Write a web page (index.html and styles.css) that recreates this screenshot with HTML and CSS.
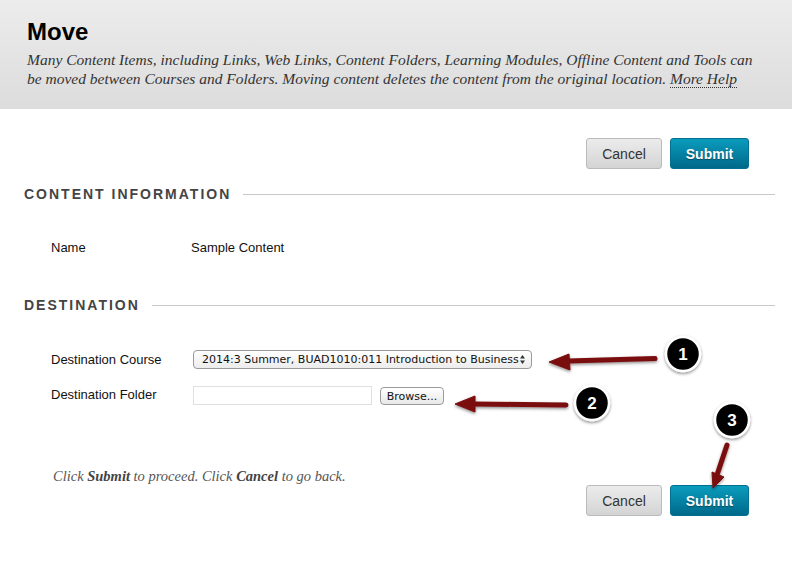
FILE: index.html
```html
<!DOCTYPE html>
<html lang="en">
<head>
<meta charset="utf-8">
<title>Move</title>
<link rel="stylesheet" href="styles.css">
</head>
<body>
<div class="page">
  <header class="page-header">
    <h1 class="title">Move</h1>
    <p class="intro">Many Content Items, including Links, Web Links, Content Folders, Learning Modules, Offline Content and Tools can<br>be moved between Courses and Folders. Moving content deletes the content from the original location. <a class="help">More Help</a></p>
  </header>
  <div class="actions actions-top">
    <button class="btn btn-cancel">Cancel</button>
    <button class="btn btn-submit">Submit</button>
  </div>
  <section class="section section-info">
    <div class="section-head"><h2 class="section-title">CONTENT INFORMATION</h2><span class="rule"></span></div>
    <div class="row row-name"><span class="label">Name</span><span class="value">Sample Content</span></div>
  </section>
  <section class="section section-dest">
    <div class="section-head"><h2 class="section-title">DESTINATION</h2><span class="rule"></span></div>
    <div class="row row-course">
      <span class="label">Destination Course</span>
      <div class="select"><span class="select-text">2014:3 Summer, BUAD1010:011 Introduction to Business</span>
        <svg class="select-caret" width="7" height="11" viewBox="0 0 7 11"><path d="M3.5 1 6 4.4H1zM3.5 10 1 6.6h5z" fill="#333"/></svg>
      </div>
    </div>
    <div class="row row-folder">
      <span class="label">Destination Folder</span>
      <div class="text-input"></div>
      <button class="browse">Browse...</button>
    </div>
  </section>
  <div class="footer-row">
    <p class="hint">Click <b>Submit</b> to proceed. Click <b>Cancel</b> to go back.</p>
    <div class="actions actions-bottom">
      <button class="btn btn-cancel">Cancel</button>
      <button class="btn btn-submit">Submit</button>
    </div>
  </div>
  <svg class="annotations" width="792" height="561" viewBox="0 0 792 561">
    <defs>
      <filter id="sh" x="-30%" y="-30%" width="160%" height="160%"><feDropShadow dx="0" dy="1.5" stdDeviation="1.5" flood-color="#000" flood-opacity=".45"/></filter>
    </defs>
    <g filter="url(#sh)" fill="#7a0c10" stroke="#7a0c10">
      <path d="M568 361 L655 358.5" stroke-width="5" stroke-linecap="round" fill="none"/>
      <path d="M549 362 L569 354 L570 370 Z" stroke-width="1"/>
      <path d="M472 404 L566 405" stroke-width="5" stroke-linecap="round" fill="none"/>
      <path d="M455 404 L475 396 L475 412 Z" stroke-width="1"/>
      <path d="M727 445 L717 475" stroke-width="5" stroke-linecap="round" fill="none"/>
      <path d="M713 488 L712 472 L724 477 Z" stroke-width="1"/>
    </g>
    <g class="badge">
      <circle cx="683" cy="354" r="17" fill="#000" stroke="#fff" stroke-width="2.5" filter="url(#sh)"/>
      <text x="683" y="360" text-anchor="middle">1</text>
      <circle cx="592" cy="403" r="17" fill="#000" stroke="#fff" stroke-width="2.5" filter="url(#sh)"/>
      <text x="592" y="409" text-anchor="middle">2</text>
      <circle cx="732" cy="420" r="17" fill="#000" stroke="#fff" stroke-width="2.5" filter="url(#sh)"/>
      <text x="732" y="426" text-anchor="middle">3</text>
    </g>
  </svg>
</div>
</body>
</html>
```
FILE: styles.css
```css
* { box-sizing: border-box; }
html, body { margin: 0; padding: 0; background: #fff; }
.page { position: relative; width: 792px; height: 561px; overflow: hidden; font-family: "Liberation Sans", Arial, sans-serif; color: #111; }

.page-header { height: 109px; padding: 18px 27px 0; background: linear-gradient(#ececec, #dcdcdc); }
.title { margin: 0; font-size: 24px; line-height: 27px; font-weight: 700; color: #000; }
.intro { margin: 5px 0 0; font-family: "Liberation Serif", serif; font-style: italic; font-size: 15.5px; line-height: 19px; color: #333; white-space: nowrap; }
.help { border-bottom: 1px dotted #333; }

.actions { display: flex; justify-content: flex-end; gap: 8px; }
.actions-top { margin-top: 29px; padding-right: 43px; }
.btn { height: 31px; border-radius: 3px; font-family: "Liberation Sans", Arial, sans-serif; font-size: 14px; padding: 0; }
.btn-cancel { width: 76px; color: #333; background: linear-gradient(#ececec, #d4d4d4); border: 1px solid #bbb; }
.btn-submit { width: 79px; color: #fff; font-weight: 700; text-shadow: 0 1px 1px rgba(0,0,0,.4); background: linear-gradient(#0a9cbd, #00698a); border: 1px solid #04708f; }

.section { padding-left: 24px; padding-right: 17px; }
.section-info { margin-top: 16px; }
.section-dest { margin-top: 40px; }
.section-head { display: flex; align-items: center; gap: 12px; height: 18px; }
.section-title { margin: 0; font-size: 14px; line-height: 18px; font-weight: 700; letter-spacing: 2px; color: #444; white-space: nowrap; }
.rule { flex: 1; height: 1px; background: #c8c8c8; }

.row { display: flex; padding-left: 27px; font-size: 13px; line-height: 16px; color: #111; }
.row-name { margin-top: 37px; }
.label { width: 140px; flex: none; }
.row-course { margin-top: 38px; }
.row-folder { margin-top: 18px; }

.select { display: flex; align-items: center; justify-content: space-between; margin-left: 2px; margin-top: -2px; width: 339px; height: 19px; padding: 0 5px 0 8px; border: 1px solid #9a9a9a; border-radius: 4px; background: linear-gradient(#fff, #ececec); font-family: "DejaVu Sans", sans-serif; font-size: 11px; white-space: nowrap; }
.text-input { margin-left: 2px; margin-top: -1px; width: 179px; height: 19px; border: 1px solid #e0e0e0; background: #fff; }
.browse { margin-left: 8px; width: 64px; height: 18px; padding: 0; border: 1px solid #9a9a9a; border-radius: 4px; background: linear-gradient(#fff, #e8e8e8); font-family: "DejaVu Sans", sans-serif; font-size: 11px; color: #111; }

.footer-row { position: relative; display: flex; justify-content: space-between; padding: 0 43px 0 53px; margin-top: 62px; }
.hint { margin: 0; font-family: "Liberation Serif", serif; font-style: italic; font-size: 14.5px; line-height: 18px; color: #555; white-space: nowrap; }
.hint b { color: #444; }
.actions-bottom { margin-top: 18px; }

.annotations { position: absolute; left: 0; top: 0; pointer-events: none; }
.badge text { font-family: "Liberation Sans", Arial, sans-serif; font-weight: 700; font-size: 17px; fill: #fff; }
```
